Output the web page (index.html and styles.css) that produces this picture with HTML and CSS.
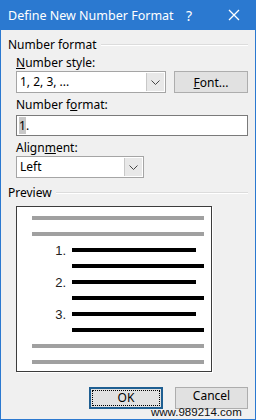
FILE: index.html
```html
<!DOCTYPE html>
<html lang="en">
<head>
   <meta charset="UTF-8">
   <meta name="viewport" content="width=device-width, initial-scale=1.0">
   <title>Define New Number Format</title>
   <link rel="stylesheet" href="styles.css">
</head>
<body>
    <div class="dialog">
        <div class="titlebar">
            <span class="title">Define New Number Format</span>
            <span class="help">?</span>
            <svg class="close" width="12" height="12" viewBox="0 0 12 12">
                <path d="M1 1 L11 11 M11 1 L1 11" stroke="#fff" stroke-width="1.3" fill="none"/>
            </svg>
        </div>

        <div class="content">
            <div class="group-label"><span>Number format</span></div>

            <div class="field-label indent"><u>N</u>umber style:</div>
            <div class="row indent">
                <div class="combo style-combo">
                    <span class="combo-text">1, 2, 3, ...</span>
                    <span class="combo-arrow">
                        <svg width="9" height="5" viewBox="0 0 9 5"><path d="M0.5 0.5 L4.5 4.5 L8.5 0.5" stroke="#444" fill="none"/></svg>
                    </span>
                </div>
                <button class="btn font-btn"><u>F</u>ont...</button>
            </div>

            <div class="field-label indent">Number f<u>o</u>rmat:</div>
            <div class="textbox indent"><span class="sel">1</span>.</div>

            <div class="field-label indent">Align<u>m</u>ent:</div>
            <div class="indent">
                <div class="combo align-combo">
                    <span class="combo-text">Left</span>
                    <span class="combo-arrow">
                        <svg width="9" height="5" viewBox="0 0 9 5"><path d="M0.5 0.5 L4.5 4.5 L8.5 0.5" stroke="#444" fill="none"/></svg>
                    </span>
                </div>
            </div>

            <div class="group-label preview-label"><span>Preview</span></div>

            <div class="preview indent">
                <div class="pline"><i class="bar grey"></i></div>
                <div class="pline"><i class="bar grey"></i></div>
                <div class="pline"><span class="num">1.</span><i class="bar short"></i></div>
                <div class="pline cont"><i class="bar"></i></div>
                <div class="pline"><span class="num">2.</span><i class="bar short"></i></div>
                <div class="pline cont"><i class="bar"></i></div>
                <div class="pline"><span class="num">3.</span><i class="bar short"></i></div>
                <div class="pline cont"><i class="bar"></i></div>
                <div class="pline"><i class="bar grey"></i></div>
                <div class="pline"><i class="bar grey"></i></div>
            </div>

            <div class="buttons">
                <button class="btn ok-btn"><span class="focus">OK</span></button>
                <button class="btn cancel-btn">Cancel</button>
            </div>
        </div>

        <div class="watermark">www.989214.com</div>
    </div>
</body>
</html>
```

FILE: styles.css
```css
body {
    margin: 0;
    font-family: "Noto Sans", "Open Sans", sans-serif;
    font-size: 12px;
    color: #000;
}

.dialog {
    position: relative;
    width: 256px;
    height: 420px;
    box-sizing: border-box;
    background: #f0f0f0;
    border: 1px solid #2b79d0;
    border-top: none;
    overflow: hidden;
}

/* Title bar */
.titlebar {
    height: 30px;
    background: #2b79d0;
    color: #fff;
    display: flex;
    align-items: center;
    padding-left: 8px;
    margin: 0 -1px;
}

.title {
    font-size: 12.5px;
    flex: 1;
}

.help {
    font-size: 14px;
    margin-right: 36px;
}

.close {
    margin-right: 16px;
}

.content {
    padding: 7px 7px 0 7px;
}

.indent {
    margin-left: 8px;
}

/* Group label with etched line */
.group-label {
    display: flex;
    align-items: center;
    height: 15px;
    line-height: 15px;
}

.group-label::after {
    content: "";
    flex: 1;
    height: 1px;
    background: #dcdcdc;
    border-bottom: 1px solid #fff;
    margin-left: 4px;
}

.field-label {
    height: 15px;
    line-height: 15px;
    margin-top: 4px;
}

.group-label + .field-label {
    margin-top: 3px;
}

.row {
    display: flex;
    margin-top: 1px;
}

/* Combo boxes */
.combo {
    display: flex;
    height: 22px;
    box-sizing: border-box;
    background: #fff;
    border: 1px solid #a5a5a5;
}

.style-combo {
    width: 150px;
}

.align-combo {
    width: 128px;
    margin-top: 1px;
}

.combo-text {
    flex: 1;
    line-height: 20px;
    padding-left: 3px;
}

.combo-arrow {
    width: 17px;
    margin: 1px;
    background: #e8e8e8;
    border-left: 1px solid #c8c8c8;
    display: flex;
    align-items: center;
    justify-content: center;
}

.textbox {
    height: 21px;
    box-sizing: border-box;
    margin-top: 3px;
    background: #fff;
    border: 1px solid #7a7a7a;
    line-height: 19px;
    padding-left: 2px;
}

.sel {
    background: #c8c8c8;
}

/* Buttons */
.btn {
    height: 22px;
    width: 74px;
    box-sizing: border-box;
    background: #e1e1e1;
    border: 1px solid #adadad;
    font-family: inherit;
    font-size: 12px;
    padding: 0;
    color: #000;
}

.font-btn {
    margin-left: 8px;
}

.buttons {
    display: flex;
    justify-content: flex-end;
    gap: 12px;
    margin-top: 15px;
}

.cancel-btn {
    width: 73px;
    line-height: 14px;
    padding-bottom: 4px;
}

.ok-btn {
    border: 2px solid #1f5f92;
    padding: 1px;
}

.focus {
    display: block;
    height: 100%;
    box-sizing: border-box;
    border: 1px dotted #000;
    line-height: 14px;
}

/* Preview */
.preview-label {
    margin-top: 7px;
}

.preview {
    width: 196px;
    height: 166px;
    box-sizing: border-box;
    margin-top: 6px;
    background: #fff;
    border: 1px solid #3c3c3c;
    box-shadow: 1px 1px 0 #fff;
    padding: 3px 7px 0 15px;
}

.pline {
    height: 16px;
    display: flex;
    align-items: center;
}

.bar {
    flex: 1;
    height: 4px;
    background: #000;
}

.bar.grey {
    background: #a0a0a0;
}

.bar.short {
    margin-right: 8px;
}

.cont {
    padding-left: 40px;
}

.num {
    width: 40px;
    box-sizing: border-box;
    text-align: right;
    padding-right: 6px;
    font-family: "Liberation Sans", Arial, sans-serif;
    font-size: 13px;
    color: #222;
}

.watermark {
    position: absolute;
    left: 150px;
    top: 406px;
    font-family: "Liberation Sans", Arial, sans-serif;
    font-size: 11.5px;
    line-height: 13px;
    color: #111;
}
```
